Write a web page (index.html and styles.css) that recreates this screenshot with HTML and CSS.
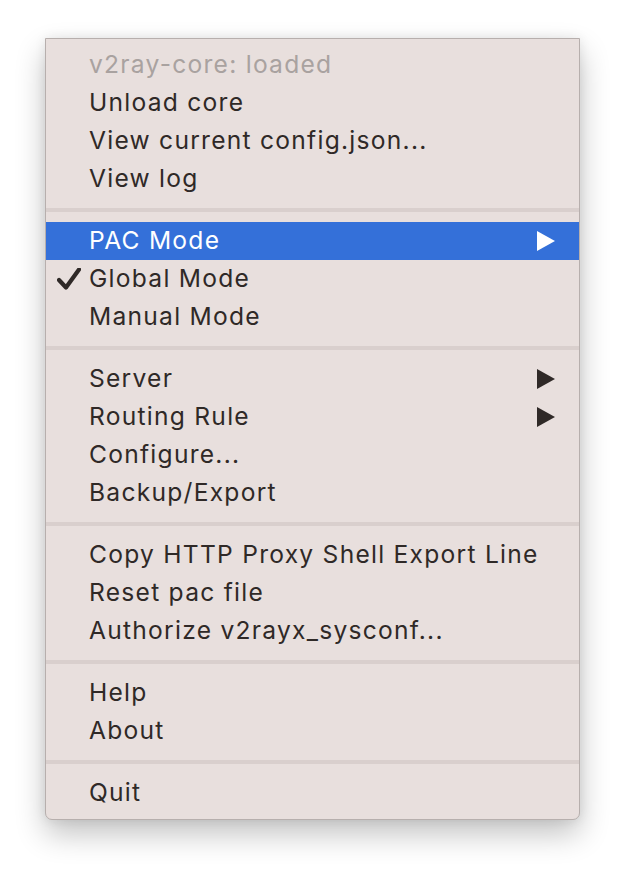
FILE: index.html
```html
<!DOCTYPE html>
<html>
<head>
<meta charset="utf-8">
<link rel="stylesheet" href="styles.css">
</head>
<body>
<div class="menu">
  <div class="item disabled">v2ray-core: loaded</div>
  <div class="item">Unload core</div>
  <div class="item">View current config.json...</div>
  <div class="item">View log</div>
  <div class="sep"></div>
  <div class="item active">PAC Mode<svg class="arrow" viewBox="0 0 18 20"><path d="M0 0 L18 10 L0 20 Z"/></svg></div>
  <div class="item"><svg class="check" viewBox="0 0 24 22"><path d="M2 12 L9 19.5 L22 1.5"/></svg>Global Mode</div>
  <div class="item">Manual Mode</div>
  <div class="sep"></div>
  <div class="item">Server<svg class="arrow" viewBox="0 0 18 20"><path d="M0 0 L18 10 L0 20 Z"/></svg></div>
  <div class="item">Routing Rule<svg class="arrow" viewBox="0 0 18 20"><path d="M0 0 L18 10 L0 20 Z"/></svg></div>
  <div class="item">Configure...</div>
  <div class="item">Backup/Export</div>
  <div class="sep"></div>
  <div class="item">Copy HTTP Proxy Shell Export Line</div>
  <div class="item">Reset pac file</div>
  <div class="item">Authorize v2rayx_sysconf...</div>
  <div class="sep"></div>
  <div class="item">Help</div>
  <div class="item">About</div>
  <div class="sep"></div>
  <div class="item">Quit</div>
</div>
</body>
</html>
```

FILE: styles.css
```css
html, body {
  margin: 0;
  padding: 0;
  background: #ffffff;
}

body {
  padding: 38px 0 60px 45px;
  font-family: Inter, "Noto Sans", "Liberation Sans", sans-serif;
}

.menu {
  box-sizing: border-box;
  width: 535px;
  background: #e8dfdd;
  border: 1px solid #b7afad;
  border-radius: 0 0 7px 7px;
  padding: 7px 0;
  box-shadow: 0 14px 30px rgba(0, 0, 0, 0.24), 0 0 12px rgba(0, 0, 0, 0.08);
}

.item {
  position: relative;
  height: 38px;
  line-height: 37px;
  padding-left: 43px;
  font-size: 24.6px;
  letter-spacing: 1.25px;
  color: #2f2927;
  white-space: nowrap;
}

.item.disabled {
  color: #a9a2a0;
}

.item.active {
  background: #3470d9;
  color: #ffffff;
}

.sep {
  height: 4px;
  margin: 10px 0;
  background: #d9cfcd;
}

.arrow {
  position: absolute;
  right: 24px;
  top: 9px;
  width: 18px;
  height: 20px;
  fill: #2f2927;
}

.item.active .arrow {
  fill: #ffffff;
}

.check {
  position: absolute;
  left: 11px;
  top: 8px;
  width: 24px;
  height: 22px;
  fill: none;
  stroke: #2f2927;
  stroke-width: 4.2;
  stroke-linecap: round;
  stroke-linejoin: round;
}
```
